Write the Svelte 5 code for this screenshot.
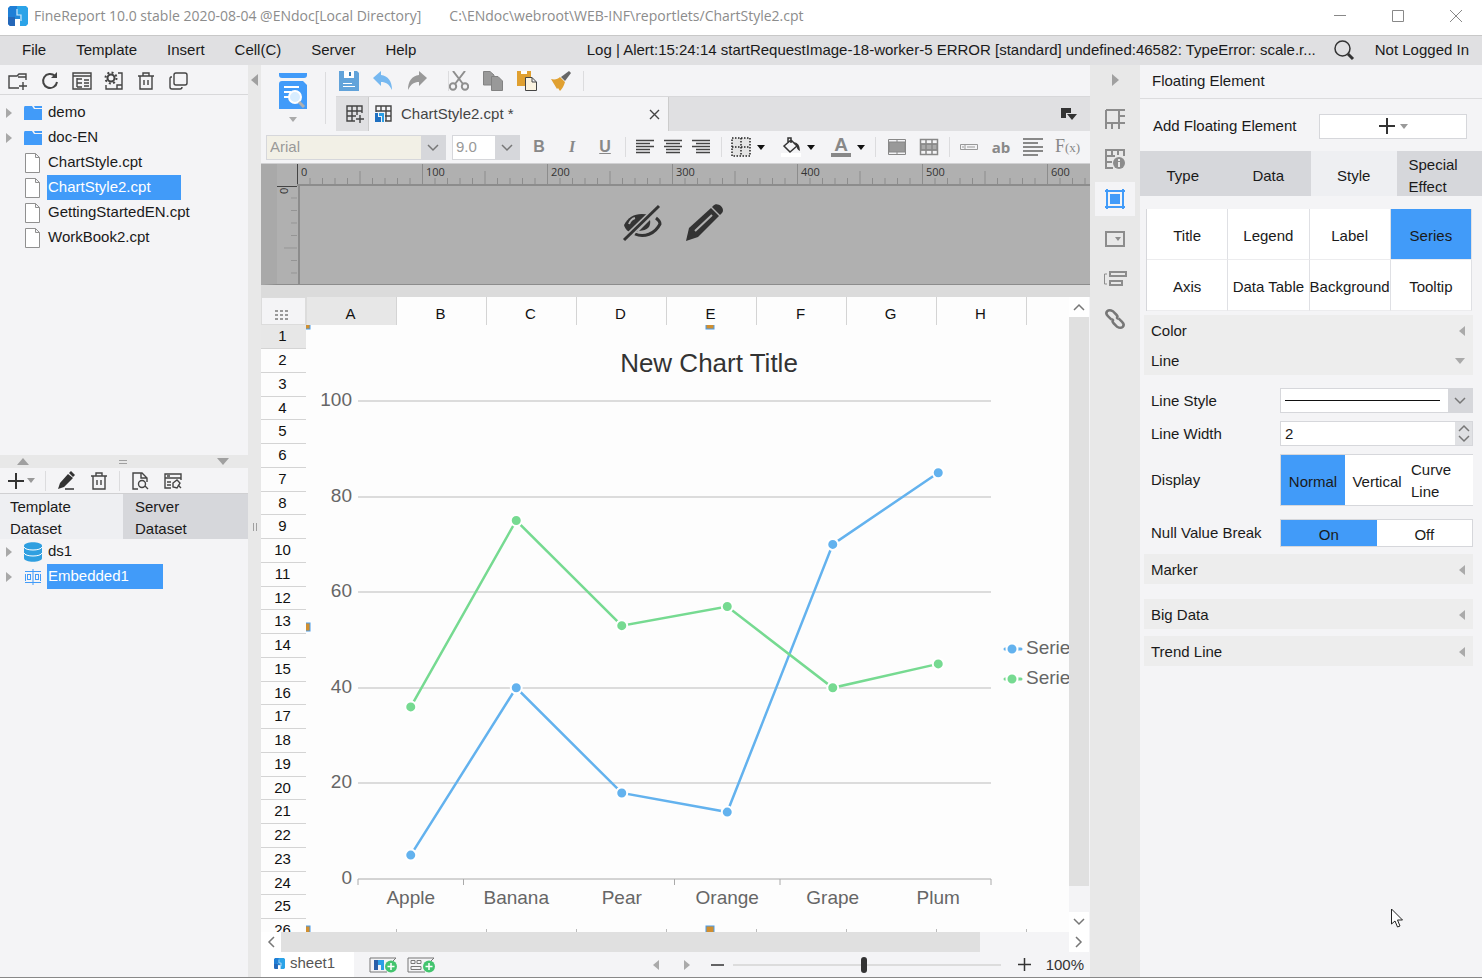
<script lang="ts">
    const menus = ["File", "Template", "Insert", "Cell(C)", "Server", "Help"];

    const files = [
        { name: "demo", folder: true },
        { name: "doc-EN", folder: true },
        { name: "ChartStyle.cpt", folder: false },
        { name: "ChartStyle2.cpt", folder: false },
        { name: "GettingStartedEN.cpt", folder: false },
        { name: "WorkBook2.cpt", folder: false },
    ];
    let selectedFile = $state("ChartStyle2.cpt");

    const columns = ["A", "B", "C", "D", "E", "F", "G", "H"];
    const rows = Array.from({ length: 26 }, (_, i) => i + 1);

    const categories = ["Apple", "Banana", "Pear", "Orange", "Grape", "Plum"];
    const series = [
        { color: "#63b2ee", values: [5, 40, 18, 14, 70, 85] },
        { color: "#76da91", values: [36, 75, 53, 57, 40, 45] },
    ];
    const gridValues = [0, 20, 40, 60, 80, 100];

    // Plot area inside the floating chart
    const plot = { left: 52, right: 685, top: 76, bottom: 554 };
    const step = (plot.right - plot.left) / categories.length;
    const px = (i: number) => plot.left + step * (i + 0.5);
    const py = (v: number) =>
        plot.bottom - (v / 100) * (plot.bottom - plot.top);
    const points = (values: number[]) =>
        values.map((v, i) => `${px(i)},${py(v)}`).join(" ");

    // Ruler: ten ticks per 100 units, 125px per 100 units
    let rulerWidth = $state(0);
    let ticks = $derived(
        Array.from({ length: Math.ceil(rulerWidth / 12.5) }, (_, i) => i),
    );
    const sideTicks = [1, 2, 3, 4, 5, 6, 7];
    const tickStart = (i: number) => (i % 10 === 0 ? 0 : i % 5 === 0 ? 7 : 14);

    const panelTabs = ["Type", "Data", "Style", "Special Effect"];
    let panelTab = $state("Style");
    const styleTabs = [
        "Title",
        "Legend",
        "Label",
        "Series",
        "Axis",
        "Data Table",
        "Background",
        "Tooltip",
    ];
    let styleTab = $state("Series");
    const displays = ["Normal", "Vertical", "Curve Line"];
    let display = $state("Normal");
    let nullBreak = $state("On");
    let lineWidth = $state(2);
    let zoom = $state(49);
</script>

{#snippet logo(size: number)}
    <svg width={size} height={size} viewBox="0 0 20 20">
        <path d="M2 0H9V9H7V20H2L0 18V2Z" fill="#1f7fd6" />
        <path d="M0 11H7V20H2L0 18Z" fill="#2467b8" />
        <path d="M9 0H18L20 2V18L18 20H12V9H9Z" fill="#2ba3e8" />
        <path d="M7 9H12V13H7Z" fill="#2388d8" />
        <path d="M9 3V9H13V15" fill="none" stroke="#cfe8fa" stroke-width="1.2" />
    </svg>
{/snippet}

{#snippet trash()}
    <svg width="20" height="20" viewBox="0 0 20 20" class="line">
        <path d="M2 5H18M7 5V2H13V5M4 5V18H16V5M8 9V14M12 9V14" />
    </svg>
{/snippet}

{#snippet caret(color: string)}
    <svg width="8" height="5" viewBox="0 0 8 5">
        <path d="M0 0H8L4 5Z" fill={color} />
    </svg>
{/snippet}

{#snippet chevron()}
    <svg width="12" height="8" viewBox="0 0 12 8" class="chev">
        <path d="M1 1L6 6L11 1" />
    </svg>
{/snippet}

{#snippet plus()}
    <svg width="18" height="18" viewBox="0 0 18 18">
        <path d="M9 1V17M1 9H17" stroke="#333" stroke-width="2" />
    </svg>
{/snippet}

{#snippet alignLines(ends: number[][], color: string)}
    <svg width="20" height="18" viewBox="0 0 20 18">
        {#each ends as [a, b], i}
            <path d="M{a} {2.5 + i * 3}H{b}" stroke={color} stroke-width="1.5" />
        {/each}
    </svg>
{/snippet}

<div class="window">
    <header class="titlebar">
        {@render logo(20)}
        <span class="title">FineReport 10.0 stable 2020-08-04 @ENdoc[Local Directory]</span>
        <span class="path">C:\ENdoc\webroot\WEB-INF\reportlets/ChartStyle2.cpt</span>
        <div class="win-buttons">
            <button aria-label="Minimize">
                <svg width="12" height="12"><path d="M0 5.5H12" /></svg>
            </button>
            <button aria-label="Maximize">
                <svg width="12" height="12"><path d="M.5 .5H11.5V11.5H.5Z" /></svg>
            </button>
            <button aria-label="Close">
                <svg width="12" height="12"><path d="M0 0L12 12M12 0L0 12" /></svg>
            </button>
        </div>
    </header>

    <nav class="menubar">
        {#each menus as menu}
            <button>{menu}</button>
        {/each}
        <span class="log">Log | Alert:15:24:14 startRequestImage-18-worker-5 ERROR [standard] undefined:46582: TypeError: scale.r...</span>
        <button class="search" aria-label="Search">
            <svg width="22" height="22" viewBox="0 0 22 22" fill="none" stroke="#333">
                <circle cx="9.5" cy="9.5" r="7.5" stroke-width="1.5" />
                <path d="M15 15L20 20" stroke-width="3" />
            </svg>
        </button>
        <button class="login">Not Logged In</button>
    </nav>

    <div class="body">
        <aside class="left">
            <div class="tools files-tools">
                <button aria-label="New folder">
                    <svg width="20" height="20" viewBox="0 0 20 20" class="line">
                        <path d="M11 17H1V5H9L11 3H18V9M10 6H18M15 11V19M11 15H19" />
                    </svg>
                </button>
                <button aria-label="Refresh">
                    <svg width="20" height="20" viewBox="0 0 20 20" class="line bold">
                        <path d="M15 5A7 7 0 1 0 17 11" />
                        <path d="M17 1V7H11Z" fill="#444" stroke="none" />
                    </svg>
                </button>
                <button aria-label="Open location">
                    <svg width="20" height="20" viewBox="0 0 20 20" class="line">
                        <path d="M1 2H19V18H1ZM1 5H19M5 7V16M5 8H10M5 12H10M5 16H10M12 9H17M12 12H17M12 15H17" />
                    </svg>
                </button>
                <button aria-label="Template settings">
                    <svg width="20" height="20" viewBox="0 0 20 20" class="line">
                        <path d="M14 2H18V18H2V14M13 18V14H18" />
                        <circle cx="7" cy="7" r="3.5" stroke-width="2" />
                        <circle cx="7" cy="7" r="5.5" stroke-width="2" stroke-dasharray="2 2.3" />
                    </svg>
                </button>
                <button aria-label="Delete file">{@render trash()}</button>
                <button aria-label="Copy">
                    <svg width="20" height="20" viewBox="0 0 20 20" class="line">
                        <rect x="6" y="2" width="13" height="12" rx="2" />
                        <path d="M4 6H3Q2 6 2 8V16Q2 18 4 18H12Q14 18 14 16" />
                    </svg>
                </button>
            </div>

            <ul class="tree files">
                {#each files as file}
                    <li>
                        <span class="twist">
                            {#if file.folder}
                                <svg width="6" height="10"><path d="M0 0L6 5L0 10Z" fill="#a8a8a8" /></svg>
                            {/if}
                        </span>
                        {#if file.folder}
                            <svg width="18" height="16" viewBox="0 0 18 16">
                                <path d="M0 3Q0 1 1 1H8L10 4H18V15H0Z" fill="#419bf9" />
                                <path d="M10 1H18V3H11Z" fill="#419bf9" />
                            </svg>
                        {:else}
                            <svg width="18" height="20" viewBox="0 0 18 20">
                                <path d="M1.5 .5H11.5L15.5 4.5V19.5H1.5ZM11.5 .5V4.5H15.5" fill="#fff" stroke="#909090" />
                            </svg>
                        {/if}
                        <button
                            class:selected={selectedFile === file.name}
                            class:wide={selectedFile === file.name}
                            onclick={() => (selectedFile = file.name)}>{file.name}</button
                        >
                    </li>
                {/each}
            </ul>

            <div class="split-h">
                <svg width="12" height="7"><path d="M0 7L6 0L12 7Z" /></svg>
                <svg width="8" height="4"><path d="M0 0H8V1H0ZM0 3H8V4H0Z" /></svg>
                <svg width="12" height="7"><path d="M0 0H12L6 7Z" /></svg>
            </div>

            <div class="tools data-tools">
                <button class="add" aria-label="Add dataset">
                    {@render plus()}{@render caret("#999")}
                </button>
                <i class="sep"></i>
                <button aria-label="Edit">
                    <svg width="20" height="20" viewBox="0 0 20 20">
                        <path d="M2 18L4 12L12 3L17 7L8 16ZM13 2L15 0L19 4L17 6Z" fill="#333" />
                        <path d="M9 18H18" stroke="#333" stroke-width="1.5" />
                    </svg>
                </button>
                <button aria-label="Delete dataset">{@render trash()}</button>
                <i class="sep"></i>
                <button aria-label="Preview">
                    <svg width="20" height="20" viewBox="0 0 20 20" class="line">
                        <path d="M8 18H3V2H12L17 7V11M11 2V7H17M15 15L18 18" />
                        <circle cx="12" cy="13" r="3.5" />
                    </svg>
                </button>
                <button aria-label="Connection">
                    <svg width="20" height="20" viewBox="0 0 20 20" class="line">
                        <path d="M18 9V3H2V17H8M2 7H18M4 5H7M4 11H8M4 14H8M18 17L15 14" />
                        <path d="M10 12L14 9L17 12L14 17L10 16Z" />
                    </svg>
                </button>
            </div>

            <div class="data-tabs" role="tablist">
                <button role="tab" aria-selected="true">Template Dataset</button>
                <button role="tab" aria-selected="false">Server Dataset</button>
            </div>

            <ul class="tree">
                <li>
                    <span class="twist"><svg width="6" height="10"><path d="M0 0L6 5L0 10Z" fill="#a8a8a8" /></svg></span>
                    <svg width="18" height="20" viewBox="0 0 18 20">
                        <path d="M0 4V16C0 21 18 21 18 16V4C18 -1 0 -1 0 4Z" fill="#2f9fe0" />
                        <path d="M0 5C1 9 17 9 18 5M0 11C1 15 17 15 18 11" fill="none" stroke="#fff" />
                    </svg>
                    <button>ds1</button>
                </li>
                <li>
                    <span class="twist"><svg width="6" height="10"><path d="M0 0L6 5L0 10Z" fill="#a8a8a8" /></svg></span>
                    <svg width="18" height="20" viewBox="0 0 18 20" fill="none" stroke="#419bf9">
                        <path d="M9 2V18M1 4.5H17M1 15.5H17M1.5 7V14M16.5 7V14" />
                        <rect x="3.5" y="7.5" width="3" height="5" />
                        <rect x="11.5" y="7.5" width="3" height="5" />
                    </svg>
                    <button class="selected embedded">Embedded1</button>
                </li>
            </ul>
        </aside>

        <div class="split-v">
            <svg class="fold" width="7" height="12"><path d="M7 0V12L0 6Z" /></svg>
            <svg class="grip" width="4" height="8"><path d="M0 0H1V8H0ZM3 0H4V8H3Z" /></svg>
        </div>

        <main class="center">
            <div class="topbar">
                <button class="preview" aria-label="Preview template">
                    <svg width="28" height="38" viewBox="0 0 28 38">
                        <path d="M0 1H28V3Q28 6 25 6H3Q0 6 0 3Z" fill="#419bf9" />
                        <path d="M0 12Q0 9 3 9H24L28 13V37H0Z" fill="#419bf9" />
                        <path d="M5 15H20M5 20H12M5 25H12" stroke="#fff" stroke-width="2" />
                        <circle cx="16" cy="25" r="6" fill="#d8edff" stroke="#fff" stroke-width="2" />
                        <path d="M20 30L25 35" stroke="#b0b0b0" stroke-width="3" />
                    </svg>
                    {@render caret("#aaa")}
                </button>
                <i class="sep"></i>
                <div class="top-rows">
                    <div class="edit-tools">
                        <div class="edit-group">
                            <button aria-label="Save">
                                <svg width="20" height="20" viewBox="0 0 20 20">
                                    <path d="M0 0H18L20 2V20H0Z" fill="#62a3da" />
                                    <path d="M5 0H15V7H5ZM4 12H13V13H4ZM4 15H16V16H4Z" fill="#fff" />
                                    <path d="M10 1H12V5H10Z" fill="#3a7fb8" />
                                </svg>
                            </button>
                            <button aria-label="Undo">
                                <svg width="20" height="20" viewBox="0 0 20 20">
                                    <path d="M0 7L8 0V4C15 5 19 10 19 19C16 13 13 11 8 11V15Z" fill="#76b8f0" />
                                </svg>
                            </button>
                            <button aria-label="Redo">
                                <svg width="20" height="20" viewBox="0 0 20 20">
                                    <path d="M20 7L12 0V4C5 5 1 10 1 19C4 13 7 11 12 11V15Z" fill="#999" />
                                </svg>
                            </button>
                        </div>
                        <i class="sep"></i>
                        <div class="edit-group">
                            <button aria-label="Cut">
                                <svg width="20" height="20" viewBox="0 0 20 20" fill="none" stroke="#8f8f8f" stroke-width="2">
                                    <path d="M4 0L14 13M16 0L6 13" />
                                    <circle cx="4" cy="15.5" r="3.2" />
                                    <circle cx="16" cy="15.5" r="3.2" />
                                </svg>
                            </button>
                            <button aria-label="Copy cells">
                                <svg width="20" height="20" viewBox="0 0 20 20" fill="#999" stroke="#828282">
                                    <path d="M.5 .5H7L11 4V14H.5Z" />
                                    <path d="M8.5 5.5H15L19.5 10V19.5H8.5Z" />
                                </svg>
                            </button>
                            <button aria-label="Paste">
                                <svg width="20" height="20" viewBox="0 0 20 20">
                                    <path d="M0 0H14V15H0Z" fill="#e0a030" />
                                    <path d="M4 0H10V3H4Z" fill="#fff" />
                                    <path d="M8.5 6.5H15L19.5 11V19.5H8.5ZM15 6.5V11H19" fill="#fbf3e0" stroke="#444" />
                                </svg>
                            </button>
                            <button aria-label="Format painter">
                                <svg width="20" height="20" viewBox="0 0 20 20">
                                    <path d="M0 8C4 9 7 8 9 6L14 11C13 15 11 18 9 20L7 17L6 18Z" fill="#e0a030" />
                                    <path d="M10 6L18 0L20 2L14 10Z" fill="#666" />
                                </svg>
                            </button>
                        </div>
                        <i class="sep"></i>
                    </div>
                    <div class="doc-tabs">
                        <button class="new-tab" aria-label="New template">
                            <svg width="20" height="20" viewBox="0 0 20 20" class="line">
                                <path d="M10 17H2V2H17V9M2 7H17M2 12H11M7 2V17M12 2V11M15 11V19M11 15H19" />
                            </svg>
                        </button>
                        <div class="doc-tab">
                            <svg width="18" height="18" viewBox="0 0 18 18" class="line">
                                <path d="M1 7V1H16V16H10M1 6H16M10 11H16M6 1V6M11 1V16" />
                                <path d="M0 8H3V12H6V17H0Z" fill="#1f6fc0" stroke="none" />
                                <path d="M4 8H9V17H7V11H4Z" fill="#2b9fe6" stroke="none" />
                            </svg>
                            <span>ChartStyle2.cpt *</span>
                            <button aria-label="Close tab">
                                <svg width="11" height="11" viewBox="0 0 11 11" class="line"><path d="M1 1L10 10M10 1L1 10" /></svg>
                            </button>
                        </div>
                        <button class="tab-list" aria-label="Tab list">
                            <svg width="16" height="13" viewBox="0 0 16 13" fill="#333">
                                <path d="M0 0H10V5H5V10H0ZM6 6H16L11 12Z" />
                            </svg>
                        </button>
                    </div>
                </div>
            </div>

            <div class="format">
                <div class="combo font">
                    <select aria-label="Font" disabled><option>Arial</option></select>
                    {@render chevron()}
                </div>
                <div class="combo size">
                    <select aria-label="Font size" disabled><option>9.0</option></select>
                    {@render chevron()}
                </div>
                <div class="group biu">
                    <button><b>B</b></button>
                    <button><em>I</em></button>
                    <button><u>U</u></button>
                </div>
                <i class="sep"></i>
                <div class="group aligns">
                    <button aria-label="Align left">{@render alignLines([[1, 19], [1, 15], [1, 19], [1, 15], [1, 15]], "#444")}</button>
                    <button aria-label="Align center">{@render alignLines([[1, 19], [3, 17], [1, 19], [3, 17], [3, 17]], "#444")}</button>
                    <button aria-label="Align right">{@render alignLines([[1, 19], [5, 19], [1, 19], [5, 19], [5, 19]], "#444")}</button>
                </div>
                <i class="sep"></i>
                <div class="group drops">
                    <button aria-label="Borders">
                        <svg width="20" height="20" viewBox="0 0 20 20">
                            <path d="M1 1H19V19H1ZM10 1V19M1 10H19" fill="#e4e4e4" stroke="#222" stroke-width="1.5" stroke-dasharray="1.5 1.5" />
                        </svg>
                        {@render caret("#111")}
                    </button>
                    <button aria-label="Fill color">
                        <svg width="20" height="20" viewBox="0 0 20 20">
                            <path d="M0 16H20V20H0Z" fill="#fff" />
                            <path d="M3 9L10 3L16 9L9 15ZM7 6V1H10V6" fill="none" stroke="#333" stroke-width="1.5" />
                            <path d="M13 5Q19 6 19 14Q15 12 16 9Z" fill="#333" />
                        </svg>
                        {@render caret("#111")}
                    </button>
                    <button aria-label="Font color">
                        <span class="font-color">A</span>
                        {@render caret("#111")}
                    </button>
                </div>
                <i class="sep"></i>
                <div class="group cells">
                    <button aria-label="Merge cells">
                        <svg width="20" height="18" viewBox="0 0 20 18" fill="none" stroke="#888">
                            <path d="M1.5 1.5H18.5V16.5H1.5ZM10 1V4M10 14V17" />
                            <path d="M2 4H18V14H2Z" fill="#999" />
                        </svg>
                    </button>
                    <button aria-label="Unmerge cells">
                        <svg width="20" height="18" viewBox="0 0 20 18" fill="none" stroke="#888">
                            <path d="M2 6H18V12H2Z" fill="#aaa" />
                            <path d="M1.5 1.5H18.5V16.5H1.5ZM7 1V17M13 1V17M2 6H18M2 12H18" stroke-width="1.5" />
                        </svg>
                    </button>
                </div>
                <i class="sep"></i>
                <div class="group tail">
                    <button aria-label="Cell element">
                        <svg width="18" height="8" viewBox="0 0 18 8" fill="none" stroke="#999">
                            <path d="M.5 1.5H17.5V6.5H.5ZM5 1.5V6.5M7 4H15M2 4H4" />
                        </svg>
                    </button>
                    <button><span class="ab">ab</span></button>
                    <button aria-label="Paragraph">
                        <svg width="20" height="20" viewBox="0 0 20 20">
                            <path d="M0 2H20M0 6H15M0 10H20M0 14H20M0 18H15" stroke="#888" stroke-width="2" />
                        </svg>
                    </button>
                    <button><span class="fx">F<small>(x)</small></span></button>
                </div>
            </div>

            <div class="header-canvas">
                <div class="ruler-x" bind:clientWidth={rulerWidth}>
                    <svg width="100%" height="22">
                        {#each ticks as t}
                            <path d="M{t * 12.5 + 0.5} {tickStart(t)}V20" stroke={t === 0 ? "#444" : "#8c8c8c"} />
                            {#if t % 10 === 0}
                                <text x={t * 12.5 + 4} y="12">{t * 10}</text>
                            {/if}
                        {/each}
                        <path d="M0 21H4000" stroke="#8c8c8c" stroke-width="2" />
                    </svg>
                </div>
                <div class="ruler-row">
                    <div class="ruler-y">
                        <svg width="21" height="98">
                            <path d="M0 .5H20" stroke="#444" />
                            {#each sideTicks as t}
                                <path d="M{tickStart(t)} {t * 12.5 - 0.5}H20" stroke="#959595" />
                            {/each}
                            <text transform="translate(11 8) rotate(-90)">0</text>
                        </svg>
                    </div>
                    <div class="header-area">
                        <svg width="42" height="40" viewBox="0 0 42 40">
                            <path d="M3 22C8 12 17 9 29 12L11 30C7 29 4 26 3 22Z" fill="#333" />
                            <path d="M35 15Q39 18 39 21C34 31 23 35 14 31M11 25Q14 28 16 27" fill="none" stroke="#333" stroke-width="3" />
                            <path d="M29 17Q31 27 18 28Z" fill="#333" />
                            <path d="M8 21Q10 16 14 15" fill="none" stroke="#b0b0b0" stroke-width="2" />
                            <path d="M3 37L39 2" stroke="#b0b0b0" stroke-width="6" />
                            <path d="M3 37L38 3" stroke="#333" stroke-width="3" />
                        </svg>
                        <svg width="38" height="38" viewBox="0 0 38 38">
                            <path d="M0 38L3 25L25 5L33 13L12 34Z" fill="#333" />
                            <path d="M27 3C31 -2 40 5 36 10L34 12L26 4Z" fill="#333" />
                            <path d="M9 28L26 12" stroke="#b0b0b0" stroke-width="2" />
                        </svg>
                    </div>
                </div>
            </div>
            <div class="band"></div>

            <div class="sheet">
                <div class="sheet-main">
                    <div class="row-heads">
                        <div class="corner">
                            <svg width="14" height="11" fill="#999">
                                {#each [0, 5, 10] as x}
                                    {#each [0, 4, 8] as y}
                                        <rect {x} {y} width="3" height="2" />
                                    {/each}
                                {/each}
                            </svg>
                        </div>
                        {#each rows as row}
                            <div class="row-head" class:current={row === 1}>{row}</div>
                        {/each}
                    </div>
                    <div class="grid">
                        <div class="col-heads">
                            {#each columns as col}
                                <div class="col-head" class:current={col === "A"}>{col}</div>
                            {/each}
                        </div>
                        <svg class="chart" width="100%" height="607">
                            <text class="chart-title" x="403" y="47">New Chart Title</text>
                            {#each gridValues as v}
                                <path d="M{plot.left} {Math.round(py(v))}H{plot.right}" stroke={v ? "#d0d0d0" : "#aaa"} stroke-width={v ? 1.5 : 1} />
                                <text class="axis" x="46" y={py(v) + 5} text-anchor="end">{v}</text>
                            {/each}
                            {#each [0, 1, 3, 4, 6] as t}
                                <path d="M{plot.left + t * step} {plot.bottom}v6" stroke="#aaa" />
                            {/each}
                            {#each categories as name, i}
                                <text class="axis" x={px(i)} y="579" text-anchor="middle">{name}</text>
                            {/each}
                            {#each series as s}
                                <polyline points={points(s.values)} fill="none" stroke={s.color} stroke-width="2.5" />
                            {/each}
                            {#each series as s, k}
                                {#each s.values as v, i}
                                    <circle cx={px(i)} cy={py(v)} r="5.5" fill={s.color} stroke="#fff" stroke-width="2" />
                                {/each}
                                <path d="M699 {324 + k * 30}H715" stroke={s.color} stroke-width="3" stroke-linecap="round" />
                                <circle cx="706" cy={324 + k * 30} r="5.5" fill={s.color} stroke="#fff" stroke-width="2" />
                                <text class="axis" x="720" y={329 + k * 30}>Series{k + 1}</text>
                            {/each}
                            <g fill="#d08f30" stroke="#4a9be8">
                                <rect x="-4" y="-3" width="8" height="7" />
                                <rect x="400" y="-3" width="8" height="7" />
                                <rect x="-4" y="298" width="8" height="8" />
                                <rect x="-4" y="601" width="8" height="9" />
                                <rect x="400" y="601" width="8" height="9" />
                            </g>
                            {#each columns as _, i}
                                <path d="M{90 * (i + 1) + 0.5} 604V607" stroke="#bbb" />
                            {/each}
                        </svg>
                    </div>
                    <div class="vscroll">
                        <button aria-label="Scroll up" class="flip">{@render chevron()}</button>
                        <div class="thumb"></div>
                        <button aria-label="Scroll down">{@render chevron()}</button>
                    </div>
                </div>
                <div class="hscroll">
                    <button aria-label="Scroll left" class="to-left">{@render chevron()}</button>
                    <div class="thumb"></div>
                    <button aria-label="Scroll right" class="to-right">{@render chevron()}</button>
                </div>
            </div>

            <footer class="statusbar">
                <button class="sheet-tab">{@render logo(11)}<span>sheet1</span></button>
                <button aria-label="Add sheet">
                    <svg width="28" height="16" viewBox="0 0 28 16">
                        <path d="M1 1H27L24 4M1 1V15H18" fill="none" stroke="#777" />
                        <path d="M5 3H9V13H5Z" fill="#2a5fa8" />
                        <path d="M9 3H15V13H12V8H9Z" fill="#2b9fe6" />
                        <circle cx="22" cy="9.5" r="6" fill="#43c46e" />
                        <path d="M22 6V13M18.5 9.5H25.5" stroke="#fff" stroke-width="1.5" />
                    </svg>
                </button>
                <button aria-label="Add form sheet">
                    <svg width="28" height="16" viewBox="0 0 28 16">
                        <path d="M1 1H27L24 4M1 1V15H18M4 3.5H8V6.5H4ZM10 3.5H14V6.5H10ZM4 9.5H14V12.5H4Z" fill="none" stroke="#777" />
                        <circle cx="22" cy="9.5" r="6" fill="#43c46e" />
                        <path d="M22 6V13M18.5 9.5H25.5" stroke="#fff" stroke-width="1.5" />
                    </svg>
                </button>
                <div class="zoom">
                    <button aria-label="Previous sheet"><svg width="6" height="10"><path d="M6 0V10L0 5Z" fill="#aaa" /></svg></button>
                    <button aria-label="Next sheet"><svg width="6" height="10"><path d="M0 0V10L6 5Z" fill="#aaa" /></svg></button>
                    <button aria-label="Zoom out"><svg width="13" height="13"><path d="M0 7H13" stroke="#333" stroke-width="1.5" /></svg></button>
                    <input type="range" aria-label="Zoom" bind:value={zoom} />
                    <button aria-label="Zoom in"><svg width="13" height="13"><path d="M0 6.5H13M6.5 0V13" stroke="#333" stroke-width="1.5" /></svg></button>
                    <span>100%</span>
                </div>
            </footer>
        </main>

        <nav class="strip">
            <button aria-label="Collapse panel">
                <svg width="7" height="12"><path d="M0 0L7 6L0 12Z" fill="#a0a0a0" /></svg>
            </button>
            <button aria-label="Cell element">
                <svg width="20" height="20" viewBox="0 0 20 20"><path d="M1 1H20M1 1V20M1 14H20M14 1V20M7 14V20M14 7H20" /></svg>
            </button>
            <button aria-label="Cell attributes">
                <svg width="20" height="20" viewBox="0 0 20 20">
                    <path d="M8 19H1V1H19V7M1 7H10M1 13H7M7 1V8M13 1V6" />
                    <circle cx="14" cy="14" r="6" fill="#8c8c8c" stroke="none" />
                    <path d="M14 10V12M14 13V18" stroke="#e8e8e8" />
                </svg>
            </button>
            <button class="active" aria-label="Floating element">
                <svg width="20" height="20" viewBox="0 0 20 20" stroke="#419bf9">
                    <path d="M0 2H20M0 18H20M2 0V20M18 0V20" />
                    <rect x="6" y="6" width="8" height="8" fill="#419bf9" />
                </svg>
            </button>
            <button aria-label="Widget">
                <svg width="20" height="20" viewBox="0 0 20 20">
                    <path d="M1 3H19V17H1Z" />
                    <path d="M10 8H16L13 12Z" fill="#8c8c8c" stroke="none" />
                </svg>
            </button>
            <button aria-label="Condition">
                <svg width="24" height="20" viewBox="0 0 24 20">
                    <path d="M7 3H23V7H7ZM7 12H19V16H7Z" />
                    <path d="M4 5H1.5V15H4" stroke-width="1" />
                </svg>
            </button>
            <button aria-label="Hyperlink">
                <svg width="20" height="20" viewBox="0 0 20 20" stroke="#777">
                    <g transform="rotate(45 10 10)" stroke-width="2.5">
                        <path d="M8 13H3Q-1 13 -1 10T3 6H8Q11 6 11 9M12 7H17Q21 7 21 10T17 14H12Q9 14 9 11" />
                    </g>
                </svg>
            </button>
        </nav>

        <aside class="right">
            <h2>Floating Element</h2>
            <div class="add-row">
                <span>Add Floating Element</span>
                <button aria-label="Add floating element">{@render plus()}{@render caret("#999")}</button>
            </div>
            <div class="panel-tabs" role="tablist">
                {#each panelTabs as tab}
                    <button role="tab" aria-selected={panelTab === tab} onclick={() => (panelTab = tab)}>
                        <span>{tab}</span>
                    </button>
                {/each}
            </div>
            <div class="style-tabs" role="tablist">
                {#each styleTabs as tab}
                    <button role="tab" aria-selected={styleTab === tab} onclick={() => (styleTab = tab)}>{tab}</button>
                {/each}
            </div>
            <div class="sections">
                {@render section("Color", false)}
                {@render section("Line", true)}
                <div class="fields">
                    <label for="line-style">Line Style</label>
                    <div class="combo line-style">
                        <select id="line-style"><option aria-label="Solid"></option></select>
                        <i class="rule"></i>
                        {@render chevron()}
                    </div>
                    <label for="line-width">Line Width</label>
                    <div class="spin">
                        <input id="line-width" type="text" bind:value={lineWidth} />
                        <div class="spin-buttons">
                            <button aria-label="Increase" class="flip" onclick={() => lineWidth++}>{@render chevron()}</button>
                            <button aria-label="Decrease" onclick={() => lineWidth--}>{@render chevron()}</button>
                        </div>
                    </div>
                    <span id="display-label">Display</span>
                    <div class="toggle tall" role="group" aria-labelledby="display-label">
                        {#each displays as d}
                            <button aria-pressed={display === d} onclick={() => (display = d)}>{d}</button>
                        {/each}
                    </div>
                    <span id="null-label">Null Value Break</span>
                    <div class="toggle" role="group" aria-labelledby="null-label">
                        {#each ["On", "Off"] as n}
                            <button aria-pressed={nullBreak === n} onclick={() => (nullBreak = n)}>{n}</button>
                        {/each}
                    </div>
                </div>
                {@render section("Marker", false)}
                <div class="extra">
                    {@render section("Big Data", false)}
                    {@render section("Trend Line", false)}
                </div>
            </div>
            <svg class="cursor" width="12" height="20" viewBox="0 0 12 20">
                <path d="M.5 1V16L4 13L6.5 19L9 18L6.5 12H11.5Z" fill="#fff" stroke="#222" />
            </svg>
        </aside>
    </div>
</div>

{#snippet section(name: string, open: boolean)}
    <button class="section" aria-expanded={open}>
        <span>{name}</span>
        {#if open}
            <svg width="10" height="6"><path d="M0 0H10L5 6Z" fill="#aaa" /></svg>
        {:else}
            <svg width="6" height="10"><path d="M6 0V10L0 5Z" fill="#aaa" /></svg>
        {/if}
    </button>
{/snippet}

<style>
    :global(body) {
        margin: 0;
    }

    .window {
        display: flex;
        flex-direction: column;
        min-height: 100vh;
        box-sizing: border-box;
        border-bottom: 1px solid #888;
        background: #f4f4f6;
        color: #1a1a1a;
        font: 15px/22px "Liberation Sans", Arial, sans-serif;
        overflow: hidden;
    }

    .window *,
    .window *::before {
        box-sizing: border-box;
    }

    button,
    input,
    select {
        font: inherit;
        color: inherit;
        margin: 0;
        padding: 0;
        border: 0;
        background: none;
        border-radius: 0;
    }

    button {
        display: flex;
        align-items: center;
        justify-content: center;
    }

    svg {
        display: block;
        flex: none;
    }

    .line {
        fill: none;
        stroke: #444;
        stroke-width: 1.4;
    }

    .line.bold {
        stroke-width: 2;
    }

    .chev {
        fill: none;
        stroke: #777;
        stroke-width: 1.5;
    }

    .sep {
        width: 1px;
        height: 20px;
        background: #dcdcde;
        flex: none;
    }

    /* Title and menu bars */
    .titlebar {
        display: flex;
        align-items: center;
        height: 36px;
        padding: 0 20px 4px 8px;
        background: #fff;
        border-bottom: 1px solid #c8c8c8;
        color: #8c8c8c;
        font: 14px/20px "Open Sans", "Noto Sans", sans-serif;
        white-space: nowrap;
    }

    .title {
        margin-left: 6px;
    }

    .path {
        margin-left: 28px;
    }

    .win-buttons {
        display: flex;
        gap: 46px;
        margin-left: auto;
    }

    .win-buttons svg {
        fill: none;
        stroke: #888;
    }

    .menubar {
        display: flex;
        align-items: center;
        height: 29px;
        padding: 0 13px 2px 22px;
        background: #e0e0e2;
        white-space: nowrap;
    }

    .menubar button {
        margin-right: 30px;
    }

    .log {
        margin-left: auto;
    }

    .menubar .search {
        margin: 0 20px 0 17px;
    }

    .menubar .login {
        margin: 0;
    }

    .body {
        flex: 1;
        display: flex;
        min-height: 0;
    }

    /* Left column */
    .left {
        width: 248px;
        flex: none;
        display: flex;
        flex-direction: column;
    }

    .tools {
        display: flex;
        align-items: center;
        height: 30px;
    }

    .files-tools {
        gap: 12px;
        padding: 2px 8px 0;
        border-bottom: 1px solid #d8d8da;
    }

    .tree {
        margin: 0;
        padding: 0;
        list-style: none;
    }

    .files {
        height: 360px;
        padding-top: 5px;
    }

    .tree li {
        display: flex;
        align-items: center;
        height: 25px;
        padding-left: 6px;
    }

    .twist {
        width: 18px;
    }

    .tree button {
        height: 25px;
        margin-left: 5px;
        padding: 0 0 1px 1px;
        justify-content: flex-start;
    }

    .tree .selected {
        background: #419bf9;
        color: #fff;
    }

    .tree .wide {
        width: 134px;
    }

    .tree .embedded {
        width: 116px;
    }

    .split-h {
        display: flex;
        align-items: center;
        justify-content: space-between;
        height: 13px;
        padding: 0 19px 0 17px;
        background: #e8e8e8;
        fill: #a0a0a0;
    }

    .data-tools {
        height: 25px;
        padding-left: 7px;
        gap: 10px;
    }

    .data-tools .add {
        gap: 2px;
    }

    .data-tools button + button {
        margin-left: 3px;
    }

    .data-tabs {
        display: flex;
        height: 46px;
        border-top: 1px solid #d0d0d2;
    }

    .data-tabs button {
        flex: 1;
        padding: 3px 50px 0 10px;
        background: #eeeff2;
        text-align: left;
        overflow: hidden;
    }

    .data-tabs button:last-child {
        padding-left: 12px;
        background: #d6d7db;
    }

    .split-v {
        width: 13px;
        flex: none;
        display: flex;
        flex-direction: column;
        align-items: center;
        background: #e8e8e8;
        fill: #a0a0a0;
        padding-top: 9px;
    }

    .grip {
        margin-top: 437px;
    }

    /* Center column */
    .center {
        flex: 1;
        min-width: 0;
        display: flex;
        flex-direction: column;
    }

    .topbar {
        display: flex;
        height: 66px;
    }

    .preview {
        flex-direction: column;
        justify-content: flex-start;
        gap: 7px;
        width: 64px;
        padding-top: 7px;
    }

    .topbar > .sep {
        height: 52px;
        margin: 7px 10px 0 0;
    }

    .top-rows {
        flex: 1;
        min-width: 0;
    }

    .edit-tools {
        display: flex;
        align-items: center;
        height: 31px;
        padding-left: 3px;
    }

    .edit-group {
        display: flex;
        gap: 14px;
    }

    .edit-tools .sep {
        margin-left: 21px;
    }

    .edit-tools .sep:last-child {
        margin-left: 12px;
    }

    .doc-tabs {
        display: flex;
        height: 35px;
        background: #e0e0e2;
        border-top: 1px solid #d8d8da;
    }

    .new-tab {
        width: 33px;
        padding-left: 5px;
        border-right: 1px solid #ccc;
    }

    .doc-tab {
        display: flex;
        align-items: center;
        width: 300px;
        padding: 0 8px 0 6px;
        background: #f4f4f6;
        border-right: 1px solid #ccc;
        color: #444;
    }

    .doc-tab span {
        margin-left: 8px;
    }

    .doc-tab button {
        margin-left: auto;
    }

    .tab-list {
        margin: 0 13px 0 auto;
    }

    .format {
        display: flex;
        align-items: center;
        height: 33px;
        padding-left: 5px;
        border-bottom: 1px solid #d0d0d2;
        overflow: hidden;
    }

    .format > .sep {
        margin: 0 9px 0 10px;
    }

    .combo {
        position: relative;
        height: 25px;
        border: 1px solid #d6d7db;
        background: #fff;
        color: #999;
    }

    .combo select {
        display: block;
        width: 100%;
        height: 100%;
        padding-left: 3px;
        appearance: none;
        opacity: 1;
        border-right: 24px solid #d6d7db;
    }

    .combo svg {
        position: absolute;
        right: 6px;
        top: 8px;
        pointer-events: none;
    }

    .font {
        width: 180px;
        background: #f2f0e6;
    }

    .size {
        width: 68px;
        margin-left: 6px;
    }

    .group {
        display: flex;
        gap: 12px;
    }

    .group button {
        min-width: 20px;
    }

    .biu {
        gap: 13px;
        margin-left: 9px;
        color: #888;
        font-size: 16px;
    }

    .biu em {
        font-family: "Liberation Serif", serif;
        font-weight: bold;
    }

    .biu u {
        font-weight: bold;
    }

    .cells {
        margin-left: 2px;
    }

    .tail {
        color: #888;
    }

    .aligns {
        gap: 8px;
    }

    .drops {
        gap: 16px;
    }

    .drops button {
        gap: 6px;
    }

    .font-color {
        width: 20px;
        border-bottom: 4px solid #888;
        color: #888;
        font-weight: bold;
        font-size: 19px;
        line-height: 16px;
    }

    .ab {
        font: bold 15px/20px "Open Sans", sans-serif;
    }

    .fx {
        font: 18px/20px "Liberation Serif", serif;
        white-space: nowrap;
    }

    .fx small {
        font-size: 13px;
    }

    .header-canvas {
        background: #b0b0b0;
        border-left: 16px solid #a9a9a9;
        border-bottom: 1px solid #8c8c8c;
        color: #333;
    }

    .header-canvas text {
        fill: #333;
        font: 11px "Open Sans", "Noto Sans", sans-serif;
    }

    .ruler-x {
        margin-left: 20px;
        overflow: hidden;
    }

    .ruler-row {
        display: flex;
    }

    .ruler-y {
        border-right: 2px solid #8c8c8c;
    }

    .header-area {
        flex: 1;
        display: flex;
        justify-content: center;
        gap: 23px;
        padding: 17px 45px 0 0;
    }

    .band {
        height: 12px;
        background: #dbdbdb;
    }

    .sheet {
        flex: 1;
        display: flex;
        flex-direction: column;
    }

    .sheet-main {
        flex: 1 1 635px;
        display: flex;
        min-height: 0;
        overflow: hidden;
        background: #fdfdfd;
        color: #111;
    }

    .row-heads {
        width: 45px;
        flex: none;
        max-height: 635px;
        overflow: hidden;
    }

    .corner {
        display: flex;
        align-items: center;
        justify-content: center;
        height: 28px;
        padding: 8px 4px 0 0;
        background: #f4f4f6;
        border: 1px solid #dcdcdc;
    }

    .row-head {
        height: 24px;
        padding-right: 2px;
        border-bottom: 1px solid #d4d4d4;
        text-align: center;
    }

    .row-head:nth-child(4n + 1) {
        height: 23px;
    }

    .current {
        background: #e7e7e7;
    }

    .grid {
        flex: 1;
        min-width: 0;
        overflow: hidden;
    }

    .col-heads {
        display: flex;
        height: 28px;
        border-left: 1px solid #dcdcdc;
    }

    .col-head {
        width: 90px;
        flex: none;
        padding: 6px 2px 0 0;
        border-right: 1px solid #d4d4d4;
        text-align: center;
    }

    .chart-title {
        font-size: 26px;
        text-anchor: middle;
        fill: #333;
    }

    .axis {
        font-size: 19px;
        fill: #666;
    }

    .vscroll {
        display: flex;
        flex-direction: column;
        width: 21px;
        flex: none;
        padding-right: 1px;
        background: #f4f4f6;
    }

    .vscroll button,
    .hscroll button {
        width: 20px;
        height: 20px;
        flex: none;
        background: #fff;
    }

    .vscroll .thumb {
        flex: 1;
        margin-bottom: 26px;
        background: #e0e0e0;
    }

    .flip svg {
        transform: rotate(180deg);
    }

    .to-left svg {
        transform: rotate(90deg);
    }

    .to-right svg {
        transform: rotate(-90deg);
    }

    .hscroll {
        display: flex;
        height: 20px;
        padding-right: 1px;
    }

    .hscroll .thumb {
        flex: 1;
        margin-right: 89px;
        background: #e0e0e0;
    }

    .statusbar {
        display: flex;
        align-items: center;
        gap: 10px;
        height: 25px;
        color: #555;
    }

    .sheet-tab {
        width: 93px;
        height: 25px;
        margin-right: 5px;
        gap: 5px;
        padding: 0 6px 3px 0;
        background: #fff;
    }

    .zoom {
        flex: 1;
        display: flex;
        align-items: center;
        margin-right: 6px;
        color: #333;
    }

    .zoom button:first-child {
        margin-left: auto;
        margin-right: 25px;
    }

    .zoom button:nth-child(2) {
        margin-right: 21px;
    }

    .zoom input {
        width: 268px;
        height: 16px;
        margin: 0 17px 0 9px;
        appearance: none;
        background: linear-gradient(#dcdcdc, #dcdcdc) center / 100% 2px no-repeat;
    }

    .zoom input::-webkit-slider-thumb {
        appearance: none;
        width: 6px;
        height: 16px;
        border-radius: 3px;
        background: #333;
    }

    .zoom span {
        margin-left: 15px;
    }

    /* Icon strip */
    .strip {
        display: flex;
        flex-direction: column;
        align-items: center;
        width: 50px;
        flex: none;
        background: #e8e8e8;
    }

    .strip button {
        width: 40px;
        height: 34px;
        margin-bottom: 6px;
    }

    .strip button:first-child {
        height: 30px;
        margin-bottom: 7px;
    }

    .strip svg {
        fill: none;
        stroke-width: 2;
        overflow: visible;
    }

    .strip svg:not([stroke]) {
        stroke: #8c8c8c;
    }

    .strip button:first-child svg {
        stroke: none;
    }

    .strip .active {
        background: #f4f4f6;
    }

    /* Property panel */
    .right {
        position: relative;
        width: 342px;
        flex: none;
    }

    h2 {
        height: 34px;
        margin: 0;
        padding: 5px 12px;
        border-bottom: 1px solid #dcdcde;
        font-size: 15px;
        font-weight: normal;
    }

    .add-row {
        display: flex;
        align-items: center;
        justify-content: space-between;
        height: 52px;
        padding: 2px 15px 0 13px;
    }

    .add-row button {
        width: 148px;
        height: 25px;
        gap: 4px;
        background: #fff;
        border: 1px solid #d6d7db;
    }

    .panel-tabs {
        display: flex;
        height: 45px;
    }

    .panel-tabs button {
        flex: 1 1 0;
        padding: 4px 12px 0;
        background: #d6d7db;
        text-align: left;
    }

    .panel-tabs button[aria-selected="true"] {
        background: #eeeff2;
    }

    .style-tabs {
        display: grid;
        grid-template-columns: repeat(4, 1fr);
        margin: 13px 10px 0 6px;
        border-left: 1px solid #d6d7db;
    }

    .style-tabs button {
        height: 51px;
        min-width: 0;
        padding-top: 4px;
        overflow: hidden;
        white-space: nowrap;
        background: #fff;
        border-right: 1px solid #dfe0e4;
        border-bottom: 1px solid #ececee;
    }

    .style-tabs button[aria-selected="true"] {
        background: #419bf9;
    }

    .sections {
        padding: 4px 9px 0 4px;
    }

    .section {
        width: 100%;
        height: 30px;
        padding: 2px 8px 0 7px;
        justify-content: space-between;
        background: #ededed;
    }

    .fields {
        display: grid;
        grid-template-columns: 129px minmax(0, 1fr);
        grid-template-rows: 25px 25px 52px 33px;
        row-gap: 8px;
        align-items: center;
        padding: 13px 0 7px 7px;
    }

    .fields > :nth-last-child(-n + 2) {
        margin-top: 5px;
    }

    .line-style select {
        padding: 0;
    }

    .rule {
        position: absolute;
        left: 4px;
        right: 32px;
        top: 11px;
        height: 1px;
        background: #111;
    }

    .spin {
        display: flex;
        height: 25px;
        border: 1px solid #d6d7db;
        background: #fff;
    }

    .spin input {
        flex: 1;
        min-width: 0;
        padding-left: 4px;
    }

    .spin-buttons {
        display: flex;
        flex-direction: column;
        width: 17px;
        background: #e0e1e4;
    }

    .spin-buttons button {
        flex: 1;
        height: 11px;
    }

    .toggle {
        display: grid;
        grid-auto-flow: column;
        grid-auto-columns: minmax(0, 1fr);
        height: 28px;
        border: 1px solid #d6d7db;
        background: #fff;
    }

    .toggle button {
        padding-top: 3px;
    }

    .toggle button[aria-pressed="true"] {
        background: #419bf9;
    }

    .tall {
        height: 52px;
        border-right: 0;
    }

    .tall button:last-child {
        padding: 2px 20px 0 2px;
        text-align: left;
    }

    .extra {
        display: grid;
        gap: 7px;
        margin-top: 15px;
    }

    .cursor {
        position: absolute;
        left: 251px;
        top: 843px;
    }
</style>
